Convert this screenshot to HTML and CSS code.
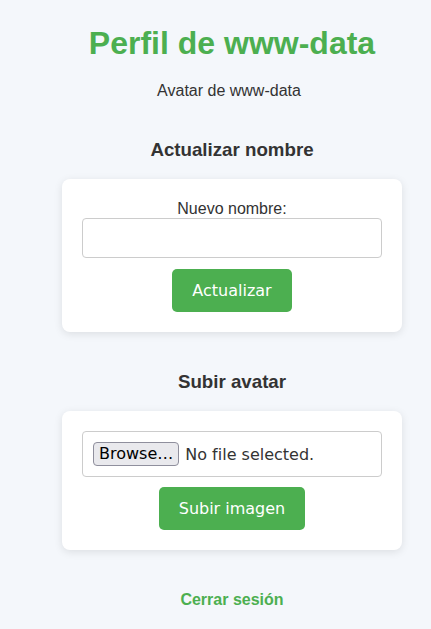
FILE: index.html
```html
<!DOCTYPE html>
<html lang="es">
<head>
<meta charset="utf-8">
<title>Perfil de www-data</title>
<link rel="stylesheet" href="styles.css">
</head>
<body>
<main class="page">
  <h1 class="title">Perfil de www-data</h1>
  <p class="avatar-alt">Avatar de www-data</p>

  <h3 class="section-title">Actualizar nombre</h3>
  <form class="card">
    <label class="field-label" for="nombre">Nuevo nombre:</label>
    <input class="text-input" id="nombre" type="text">
    <button class="btn" type="button">Actualizar</button>
  </form>

  <h3 class="section-title">Subir avatar</h3>
  <form class="card">
    <div class="file-input">
      <span class="file-btn">Browse…</span>
      <span class="file-status">No file selected.</span>
    </div>
    <button class="btn btn-upload" type="button">Subir imagen</button>
  </form>

  <a class="logout" href="#">Cerrar sesión</a>
</main>
</body>
</html>
```

FILE: styles.css
```css
html, body {
  margin: 0;
  padding: 0;
  background: #f4f7fb;
}

body {
  font-family: "Liberation Sans", Arial, sans-serif;
  color: #333;
}

.page {
  display: flex;
  flex-direction: column;
  align-items: center;
  padding: 25px 0 0 33px;
}

.title {
  margin: 0;
  font-size: 32px;
  line-height: 37px;
  font-weight: 700;
  color: #4caf50;
}

.avatar-alt {
  margin: 20px 6px 0 0;
  font-size: 16px;
  line-height: 18px;
}

.section-title {
  margin: 39px 0 18px;
  font-size: 18.72px;
  line-height: 22px;
  font-weight: 700;
}

.card {
  box-sizing: border-box;
  width: 340px;
  padding: 20px;
  background: #fff;
  border-radius: 8px;
  box-shadow: 0 2px 8px rgba(0, 0, 0, 0.1);
  display: flex;
  flex-direction: column;
  align-items: center;
}

.field-label {
  display: block;
  font-size: 16px;
  line-height: 19px;
  text-align: center;
}

.text-input {
  box-sizing: border-box;
  width: 300px;
  height: 40px;
  margin: 0 0 11px;
  border: 1px solid #ccc;
  border-radius: 4px;
  background: #fff;
  font: 16px "DejaVu Sans", sans-serif;
}

.btn {
  box-sizing: border-box;
  height: 43px;
  padding: 0 20px;
  border: 0;
  border-radius: 5px;
  background: #4caf50;
  color: #fff;
  font: 16px/19px "DejaVu Sans", sans-serif;
}

.btn-upload {
  margin-top: 10px;
}

.file-input {
  box-sizing: border-box;
  width: 300px;
  height: 46px;
  padding: 10px;
  border: 1px solid #ccc;
  border-radius: 4px;
  display: flex;
  align-items: center;
  font: 16px "DejaVu Sans", sans-serif;
}

.file-btn {
  box-sizing: border-box;
  height: 24px;
  padding: 1px 5px;
  border: 1px solid #8f8f9d;
  border-radius: 4px;
  background: #e9e9ed;
  color: #000;
  line-height: 20px;
}

.file-status {
  margin-left: 6px;
  color: #333;
}

.logout {
  margin-top: 41px;
  font-size: 16px;
  line-height: 18px;
  font-weight: 700;
  color: #4caf50;
  text-decoration: none;
}
```
